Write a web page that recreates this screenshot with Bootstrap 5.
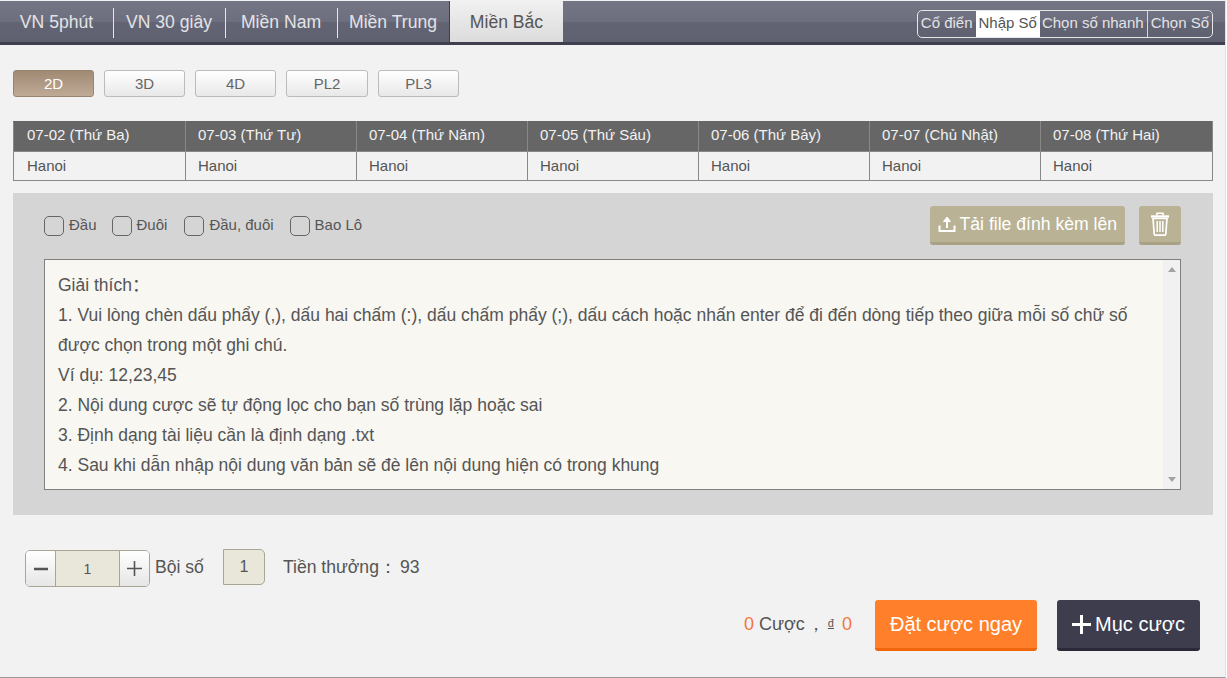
<!DOCTYPE html>
<html lang="en">
<head>
    <meta charset="UTF-8">
    <meta name="viewport" content="width=device-width, initial-scale=1.0">
    <title>Nhập Số</title>
    <link href="https://cdn.jsdelivr.net/npm/bootstrap@5.3.0/dist/css/bootstrap.min.css" rel="stylesheet">
    <style>
        html, body {
            height: 678px;
            overflow: hidden;
        }
        body {
            background: #fff;
            color: #555;
            font-family: "Liberation Sans", Arial, sans-serif;
        }
        .game-wrap {
            width: 1226px;
            height: 678px;
            background: #f2f2f2;
            border-right: 1px solid #e2e2e2;
            border-bottom: 1px solid #999;
        }
        .top-bar {
            height: 45px;
            border-top: 1px solid #f2f2f2;
            border-bottom: 3px solid #3f3f50;
            background: linear-gradient(#747585 0, #6d6e7e 50%, #626373 52%, #5f6070 100%);
        }
        .region-tab {
            width: 112px;
            height: 41px;
            line-height: 42px;
            text-align: center;
            font-size: 17.6px;
            color: #e3e3e6;
            text-decoration: none;
            position: relative;
        }
        .region-tab:first-child {
            width: 113px;
        }
        .region-tab + .region-tab::before {
            content: "";
            position: absolute;
            left: 0;
            top: 7px;
            height: 30px;
            border-left: 1px solid #e6e6e6;
        }
        .region-tab.on {
            width: 114px;
            background: linear-gradient(#f0f0f0, #dcdcdc);
            color: #555;
            border-left: 1px solid #3f3f50;
        }
        .region-tab.on::before {
            display: none;
        }
        .mode-switch {
            margin: 9px 12px 0 0;
            height: 28px;
            border: 1px solid #e6e6e6;
            border-radius: 5px;
            overflow: hidden;
        }
        .mode-item {
            font-size: 15px;
            line-height: 24px;
            padding: 0 3px;
            color: #e3e3e6;
            border-left: 1px solid #d8d8dc;
        }
        .mode-item:first-child {
            border-left: 0;
        }
        .mode-item.on {
            background: #fff;
            color: #555;
            border-left: 0;
        }
        .mode-item.on + .mode-item {
            border-left: 0;
            padding-left: 2px;
        }
        .digit-row {
            padding: 25px 0 0 13px;
            gap: 10px;
        }
        .digit-btn {
            width: 81px;
            height: 27px;
            padding: 0;
            font-size: 15px;
            line-height: 25px;
            color: #666;
            border: 1px solid #bbb;
            border-radius: 3px;
            background: linear-gradient(#fff, #e8e8e8);
        }
        .digit-btn.wide {
            width: 82px;
        }
        .digit-btn.on {
            color: #fff;
            border-color: #99856f;
            background: linear-gradient(#a08a74, #bfaa96);
        }
        .date-table {
            width: 1199px;
            margin: 24px 0 0 13px;
            table-layout: fixed;
            border-collapse: collapse;
            font-size: 15px;
        }
        .date-table th, .date-table td {
            height: 29px;
            padding: 1px 0 0 12px;
            border: 1px solid #888;
            color: #555;
            font-weight: 400;
            width: 171px;
        }
        .date-table tr > :first-child {
            padding-left: 13px;
        }
        .date-table th:first-child {
            width: 172px;
        }
        .date-table th:last-child {
            width: 172px;
        }
        .date-table th {
            height: 30px;
            padding-top: 0;
            padding-bottom: 2px;
            background: #666;
            color: #f2f2f2;
            border-top-color: #666;
        }
        .bet-panel {
            margin: 12px 0 0 13px;
            width: 1200px;
            height: 322px;
            padding: 13px 32px 0 31px;
            background: #d5d5d5;
        }
        .panel-tools {
            height: 39px;
            margin-bottom: 14px;
        }
        .pick-opt {
            font-size: 15px;
            margin-right: 16px;
        }
        .pick-opt:first-child {
            margin-right: 15px;
        }
        .pick-opt:nth-child(2) {
            margin-right: 17px;
        }
        .pick-box {
            display: inline-block;
            width: 20px;
            height: 20px;
            margin-right: 5px;
            border: 1px solid #666;
            border-radius: 5px;
        }
        .khaki-btn {
            height: 39px;
            padding: 0 8px;
            border: 0;
            border-bottom: 3px solid #a8a184;
            border-radius: 3px;
            background: #b9b295;
            color: #fff;
            font-size: 17.6px;
        }
        .trash-btn {
            width: 42px;
            margin-left: 14px;
            padding: 0;
        }
        .note-box {
            height: 231px;
            border: 1px solid #808080;
            background: #f8f7f2;
        }
        .note-text {
            padding: 10px 0 0 13px;
            font-size: 17.5px;
            line-height: 30px;
            color: #555;
            font-family: "Liberation Sans", "Noto Sans CJK SC", Arial, sans-serif;
        }
        .fake-scroll {
            width: 17px;
            background: #f1f1f1;
            padding: 7px 0;
        }
        .arrow-up, .arrow-down {
            width: 0;
            height: 0;
            margin: 0 auto;
            border-left: 4px solid transparent;
            border-right: 4px solid transparent;
        }
        .arrow-up {
            border-bottom: 5px solid #a3a3a3;
        }
        .arrow-down {
            border-top: 5px solid #a3a3a3;
        }
        .multi-row {
            padding: 35px 0 0 25px;
            height: 72px;
            font-size: 17.6px;
        }
        .stepper {
            width: 125px;
            height: 37px;
            border: 1px solid #aaa696;
            border-radius: 5px;
            overflow: hidden;
        }
        .step-btn {
            width: 29px;
            background: linear-gradient(#fff, #e6e6e6);
            color: #555;
        }
        .step-val {
            flex: 1;
            background: #e9e6da;
            border-left: 1px solid #aaa696;
            border-right: 1px solid #aaa696;
            text-align: center;
            font-size: 14px;
            line-height: 37px;
        }
        .multi-box {
            width: 42px;
            height: 36px;
            margin: -1px 18px 0 19px;
            border: 1px solid #aaa696;
            border-radius: 0 5px 5px 0;
            background: #e9e6da;
            text-align: center;
            line-height: 34px;
            font-size: 16px;
        }
        .multi-label {
            line-height: 34px;
        }
        .multi-label.first {
            margin-left: 5px;
        }
        .prize-num {
            margin-left: 3px;
        }
        .action-row {
            padding: 13px 25px 0 0;
            font-size: 18px;
        }
        .sum-text {
            margin-bottom: 2px;
        }
        .sum-num {
            color: #f4753d;
        }
        .comma-sign {
            margin-left: 2px;
        }
        .dong-sign {
            font-size: 11px;
            text-decoration: underline;
            margin: 0 8px 0 3px;
            position: relative;
            top: -3px;
        }
        .big-btn {
            height: 51px;
            padding: 0;
            border: 0;
            border-radius: 3px;
            color: #fff;
            font-size: 20px;
        }
        .big-btn.bet-now {
            width: 162px;
            margin: 0 20px 0 23px;
            background: #ff7f2a;
            border-bottom: 3px solid #f0660a;
        }
        .big-btn.bet-list {
            width: 143px;
            background: #3d3d4e;
            border-bottom: 3px solid #2a2a38;
        }
    </style>
</head>
<body>
    <div class="game-wrap">
        <!-- Top tabs -->
        <div class="top-bar d-flex justify-content-between">
            <div class="d-flex">
                <a class="region-tab">VN 5phút</a>
                <a class="region-tab">VN 30 giây</a>
                <a class="region-tab">Miền Nam</a>
                <a class="region-tab">Miền Trung</a>
                <a class="region-tab on">Miền Bắc</a>
            </div>
            <div class="mode-switch d-flex">
                <span class="mode-item">Cổ điển</span>
                <span class="mode-item on">Nhập Số</span>
                <span class="mode-item">Chọn số nhanh</span>
                <span class="mode-item">Chọn Số</span>
            </div>
        </div>

        <!-- 2D / 3D -->
        <div class="digit-row d-flex">
            <button class="digit-btn on">2D</button>
            <button class="digit-btn">3D</button>
            <button class="digit-btn">4D</button>
            <button class="digit-btn wide">PL2</button>
            <button class="digit-btn">PL3</button>
        </div>

        <table class="date-table">
            <tr>
                <th>07-02 (Thứ Ba)</th>
                <th>07-03 (Thứ Tư)</th>
                <th>07-04 (Thứ Năm)</th>
                <th>07-05 (Thứ Sáu)</th>
                <th>07-06 (Thứ Bảy)</th>
                <th>07-07 (Chủ Nhật)</th>
                <th>07-08 (Thứ Hai)</th>
            </tr>
            <tr>
                <td>Hanoi</td><td>Hanoi</td><td>Hanoi</td><td>Hanoi</td><td>Hanoi</td><td>Hanoi</td><td>Hanoi</td>
            </tr>
        </table>

        <div class="bet-panel">
            <div class="panel-tools d-flex align-items-center">
                <label class="pick-opt d-flex align-items-center"><span class="pick-box"></span>Đầu</label>
                <label class="pick-opt d-flex align-items-center"><span class="pick-box"></span>Đuôi</label>
                <label class="pick-opt d-flex align-items-center"><span class="pick-box"></span>Đầu, đuôi</label>
                <label class="pick-opt d-flex align-items-center"><span class="pick-box"></span>Bao Lô</label>
                <button class="khaki-btn ms-auto d-flex align-items-center gap-1">
                    <svg width="18" height="16" viewBox="0 0 18 16" fill="none" stroke="#fff" stroke-width="2">
                        <path d="M1.5 9.5V15h15V9.5"/>
                        <path d="M9 12V4"/>
                        <path d="M5.5 5.5L9 1l3.5 4.5z" fill="#fff" stroke-width="1"/>
                    </svg>
                    Tải file đính kèm lên
                </button>
                <button class="khaki-btn trash-btn d-flex align-items-center justify-content-center">
                    <svg width="18" height="24" viewBox="0 0 18 24" fill="none" stroke="#fff">
                        <path d="M0 4.5h18" stroke-width="2.4"/>
                        <path d="M6 3.5V1.2h6v2.3" stroke-width="1.6"/>
                        <path d="M2 6.5l1.2 15.5q.1 1.2 1.3 1.2h9q1.2 0 1.3-1.2L16 6.5z" stroke-width="1.7"/>
                        <path d="M6.2 9v11M9 9v11M11.8 9v11" stroke-width="1.5"/>
                    </svg>
                </button>
            </div>
            <div class="note-box d-flex">
                <div class="note-text flex-grow-1">
                    Giải thích：<br>
                    1. Vui lòng chèn dấu phẩy (,), dấu hai chấm (:), dấu chấm phẩy (;), dấu cách hoặc nhấn enter để đi đến dòng tiếp theo giữa mỗi số chữ số<br>
                    được chọn trong một ghi chú.<br>
                    Ví dụ: 12,23,45<br>
                    2. Nội dung cược sẽ tự động lọc cho bạn số trùng lặp hoặc sai<br>
                    3. Định dạng tài liệu cần là định dạng .txt<br>
                    4. Sau khi dẫn nhập nội dung văn bản sẽ đè lên nội dung hiện có trong khung
                </div>
                <div class="fake-scroll d-flex flex-column justify-content-between">
                    <div class="arrow-up"></div>
                    <div class="arrow-down"></div>
                </div>
            </div>
        </div>

        <div class="multi-row d-flex align-items-start">
            <div class="stepper d-flex">
                <div class="step-btn d-flex align-items-center justify-content-center">
                    <svg width="14" height="14" viewBox="0 0 14 14"><path d="M0 7h14" stroke="#555" stroke-width="2.4"/></svg>
                </div>
                <div class="step-val">1</div>
                <div class="step-btn d-flex align-items-center justify-content-center">
                    <svg width="15" height="15" viewBox="0 0 15 15"><path d="M0 7.5h15M7.5 0v15" stroke="#555" stroke-width="1.6"/></svg>
                </div>
            </div>
            <span class="multi-label first">Bội số</span>
            <div class="multi-box">1</div>
            <span class="multi-label">Tiền thưởng：<span class="prize-num">93</span></span>
        </div>

        <div class="action-row d-flex justify-content-end align-items-center">
            <span class="sum-text"><span class="sum-num">0</span>&nbsp;Cược<span class="comma-sign">，</span><span class="dong-sign">đ</span><span class="sum-num">0</span></span>
            <button class="big-btn bet-now">Đặt cược ngay</button>
            <button class="big-btn bet-list d-flex align-items-center justify-content-center gap-1">
                <svg width="19" height="19" viewBox="0 0 19 19"><path d="M0 9.5h19M9.5 0v19" stroke="#fff" stroke-width="3"/></svg>
                Mục cược
            </button>
        </div>
    </div>
    <script src="https://cdn.jsdelivr.net/npm/bootstrap@5.3.0/dist/js/bootstrap.bundle.min.js"></script>
</body>
</html>
